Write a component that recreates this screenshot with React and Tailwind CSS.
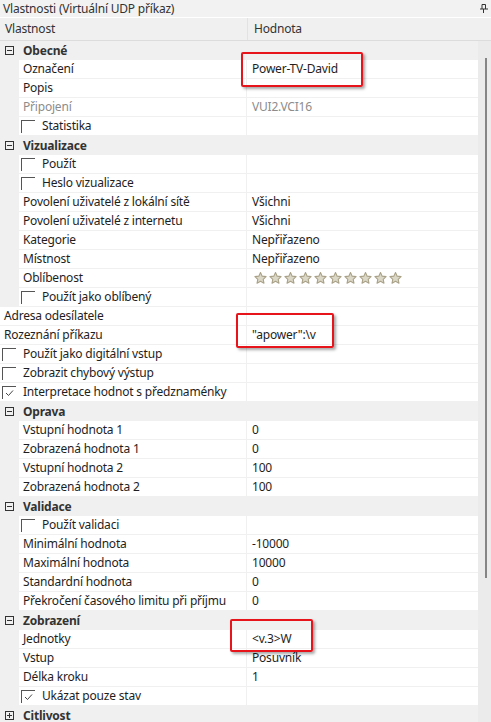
import React from 'react';

const FONT = { fontFamily: '"Segoe UI", "Noto Sans", sans-serif', letterSpacing: '-0.2px' };

// property grid rows: cat = category header, sub = child of a category, top = root item
const rows = [
  { t: 'cat', label: 'Obecné' },
  { t: 'sub', label: 'Označení', value: 'Power-TV-David', mark: 'left-[241px] w-[122px] -top-[8px] h-[35px]' },
  { t: 'sub', label: 'Popis' },
  { t: 'sub', label: 'Připojení', value: 'VUI2.VCI16', dim: true },
  { t: 'sub', label: 'Statistika', check: false },
  { t: 'cat', label: 'Vizualizace' },
  { t: 'sub', label: 'Použít', check: false },
  { t: 'sub', label: 'Heslo vizualizace', check: false },
  { t: 'sub', label: 'Povolení uživatelé z lokální sítě', value: 'Všichni' },
  { t: 'sub', label: 'Povolení uživatelé z internetu', value: 'Všichni' },
  { t: 'sub', label: 'Kategorie', value: 'Nepřiřazeno' },
  { t: 'sub', label: 'Místnost', value: 'Nepřiřazeno' },
  { t: 'sub', label: 'Oblíbenost', stars: 10 },
  { t: 'sub', label: 'Použít jako oblíbený', check: false },
  { t: 'top', label: 'Adresa odesílatele' },
  { t: 'top', label: 'Rozeznání příkazu', value: '"apower":\\v', mark: 'left-[236px] w-[98px] -top-[13px] h-[35px]' },
  { t: 'top', label: 'Použít jako digitální vstup', check: false },
  { t: 'top', label: 'Zobrazit chybový výstup', check: false },
  { t: 'top', label: 'Interpretace hodnot s předznaménky', check: true },
  { t: 'cat', label: 'Oprava' },
  { t: 'sub', label: 'Vstupní hodnota 1', value: '0' },
  { t: 'sub', label: 'Zobrazená hodnota 1', value: '0' },
  { t: 'sub', label: 'Vstupní hodnota 2', value: '100' },
  { t: 'sub', label: 'Zobrazená hodnota 2', value: '100' },
  { t: 'cat', label: 'Validace' },
  { t: 'sub', label: 'Použít validaci', check: false },
  { t: 'sub', label: 'Minimální hodnota', value: '-10000' },
  { t: 'sub', label: 'Maximální hodnota', value: '10000' },
  { t: 'sub', label: 'Standardní hodnota', value: '0' },
  { t: 'sub', label: 'Překročení časového limitu při příjmu', value: '0' },
  { t: 'cat', label: 'Zobrazení' },
  { t: 'sub', label: 'Jednotky', value: '<v.3>W', mark: 'left-[230px] w-[83px] -top-[11px] h-[33px]' },
  { t: 'sub', label: 'Vstup', value: 'Posuvník' },
  { t: 'sub', label: 'Délka kroku', value: '1' },
  { t: 'sub', label: 'Ukázat pouze stav', check: true },
  { t: 'cat', label: 'Citlivost', collapsed: true },
];

function Expander({ collapsed }) {
  return (
    <svg width="9" height="9" viewBox="0 0 9 9" className="shrink-0">
      <rect x="0.5" y="0.5" width="8" height="8" fill="none" stroke="#333" />
      <path d="M2 4.5h5" stroke="#333" />
      {collapsed && <path d="M4.5 2v5" stroke="#333" />}
    </svg>
  );
}

function Check({ on }) {
  return (
    <div className="w-[14px] h-[13px] border-l border-t border-[#555] shrink-0 flex items-center justify-center">
      {on && (
        <svg width="9" height="8" viewBox="0 0 9 8">
          <path d="M1 4l2.5 2.5L8 1.5" fill="none" stroke="#444" strokeWidth="1" />
        </svg>
      )}
    </div>
  );
}

function Star() {
  return (
    <svg width="13" height="12" viewBox="0 0 24 22">
      <path
        d="M12 1l3.1 6.6 7.2.9-5.3 5 1.4 7.1L12 17.1 5.6 20.6 7 13.5 1.7 8.5l7.2-.9z"
        fill="#dcd8c8"
        stroke="#a9a187"
        strokeWidth="2"
        strokeLinejoin="round"
      />
    </svg>
  );
}

function Row({ r }) {
  if (r.t === 'cat') {
    return (
      <div className="h-[19px] flex items-center bg-[#f0f0f0] pl-[5px] gap-[9px]">
        <Expander collapsed={r.collapsed} />
        <span className="font-bold text-[#333]">{r.label}</span>
      </div>
    );
  }
  const indent = r.t === 'sub';
  const tone = r.dim ? 'text-[#8c8c8c]' : 'text-[#1e1e1e]';
  return (
    <div className="h-[19px] flex bg-[#f0f0f0] relative">
      {indent && <div className="w-[19px] shrink-0" />}
      <div className="flex-1 flex bg-white border-b border-[#f0f0f0]">
        <div
          className={`${indent ? 'w-[228px]' : 'w-[247px]'} shrink-0 flex items-center border-r border-[#f0f0f0] pl-[2px] ${tone}`}
        >
          {r.check !== undefined ? (
            <div className="flex items-center gap-[7px]">
              <Check on={r.check} />
              <span>{r.label}</span>
            </div>
          ) : (
            <span className="pl-[2px]">{r.label}</span>
          )}
        </div>
        <div className={`flex-1 flex items-center pl-[5px] ${tone}`}>
          {r.stars ? (
            <div className="flex gap-[2px] pl-[2px]">
              {Array.from({ length: r.stars }).map((_, i) => (
                <Star key={i} />
              ))}
            </div>
          ) : (
            r.value
          )}
        </div>
      </div>
      {r.mark && (
        <div
          className={`absolute z-10 ${r.mark} border-2 border-[#e8141b] rounded-[2px] shadow-[2px_2px_3px_rgba(0,0,0,0.35)] pointer-events-none`}
        />
      )}
    </div>
  );
}

export default function App() {
  return (
    <div className="w-[491px] h-[722px] overflow-hidden bg-[#f0f0f0] text-[12px] leading-none" style={FONT}>
      <div className="h-[17px] flex items-center justify-between pl-[3px] pr-[3px] bg-[#f2f2f2] text-[#333]">
        <span>Vlastnosti (Virtuální UDP příkaz)</span>
        <svg width="8" height="9" viewBox="0 0 8 9">
          <path d="M2 .5h3.5v4.5" fill="none" stroke="#333" />
          <path d="M2 .5v4.5" stroke="#333" />
          <path d="M0 5h8" stroke="#333" />
          <path d="M3.5 5v4" stroke="#333" />
        </svg>
      </div>
      <div className="h-[1px] bg-white" />
      <div className="h-[23px] flex items-center bg-[#f0f0f0] border-b border-[#dcdcdc] text-[#333]">
        <div className="w-[248px] h-full flex items-center pl-[5px] border-r border-[#e2e2e2]">Vlastnost</div>
        <div className="pl-[6px]">Hodnota</div>
      </div>
      <div className="flex">
        <div className="w-[478px] shrink-0">
          {rows.map((r, i) => (
            <Row key={i} r={r} />
          ))}
        </div>
        <div className="flex-1 bg-[#ebebeb] relative">
          <div className="absolute left-[7px] top-[17px] w-[2px] h-[520px] bg-[#858585]" />
        </div>
      </div>
    </div>
  );
}
